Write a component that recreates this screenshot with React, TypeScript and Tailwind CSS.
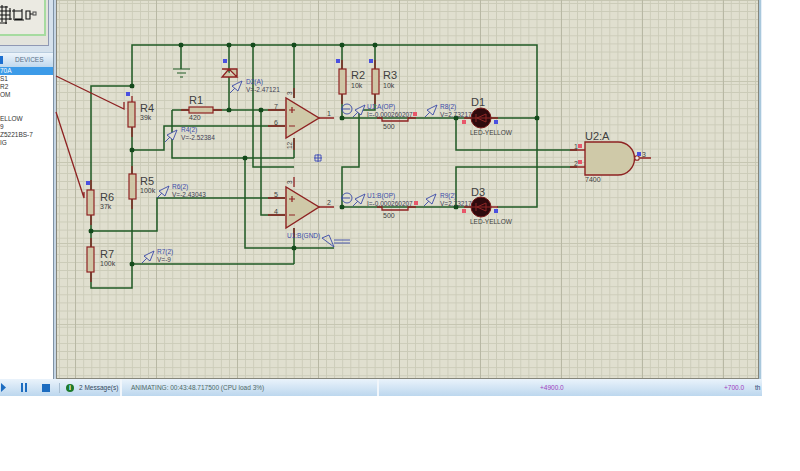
const WIRE = '#1f5a24';
const RED = '#8e2222';

const wires = [
  'M132 86V45H537V207H497',
  'M132 127V174M132 199V288H91V272',
  'M132 86H91V190M91 215V247',
  'M91 231H157V198H285',
  'M132 264H294',
  'M181 45V69',
  'M229 45V110',
  'M253 45V167H294',
  'M261 110V215H285',
  'M245 158V248H334',
  'M172 110V158H294',
  'M172 110H189M213 110H285',
  'M132 150H164V126H285',
  'M294 45V98M294 138V158',
  'M294 228V264',
  'M342 45V69M342 94V118',
  'M375 45V69M375 94V110H359V167H342V207',
  'M342 118H471M491 118H537',
  'M342 207H471',
  'M456 118V150H577M456 207V167H577',
];

const redLines = [
  'M285 110H268M285 126H268M285 198H268M285 215H268',
  'M294 98V88M294 138V150M294 187V177M294 228V238',
  'M319 118H334M319 207H334',
  'M132 96V102M132 127V137M132 174V166M132 199V209',
  'M91 180V190M91 215V225M91 247V238M91 272V282',
  'M342 69V60M342 94V104M375 69V60M375 94V104',
  'M189 110H181M213 110H222',
  'M377 118H382V121H408V118H416M377 207H382V210H408V207H416',
  'M570 150H585M570 167H585M640 158H651',
  'M471 118H464M491 118H498M471 207H464M491 207H498',
];

const dots = [
  [132, 86], [132, 150], [132, 264], [91, 231], [181, 45], [229, 45], [253, 45], [294, 45],
  [342, 45], [375, 45], [229, 110], [261, 110], [245, 158], [294, 248], [342, 118], [342, 207],
  [456, 118], [456, 207], [537, 118],
];

const resistors = [
  [128, 102], [129, 174], [87, 190], [87, 247], [339, 69], [372, 69],
];

const blueMarks = [[128, 94], [88, 183], [225, 61], [338, 61], [371, 61], [496, 122], [496, 211], [639, 154]];
const redMarks = [[464, 122], [464, 211], [415, 114], [416, 203], [580, 146], [580, 162]];

// name, x, y, size
const labels: [string, number, number, number][] = [
  ['R4', 140, 112, 11], ['39k', 140, 120, 7],
  ['R5', 140, 185, 11], ['100k', 140, 193, 7],
  ['R6', 100, 201, 11], ['37k', 100, 209, 7],
  ['R7', 100, 258, 11], ['100k', 100, 266, 7],
  ['R1', 189, 104, 11], ['420', 189, 120, 7],
  ['R2', 351, 79, 11], ['10k', 351, 88, 7],
  ['R3', 383, 79, 11], ['10k', 383, 88, 7],
  ['D1', 471, 106, 11], ['LED-YELLOW', 470, 135, 6.5],
  ['D3', 471, 196, 11], ['LED-YELLOW', 470, 224, 6.5],
  ['500', 383, 129, 7], ['500', 383, 218, 7],
  ['U2:A', 585, 140, 11], ['7400', 585, 182, 7],
  ['7', 274, 109, 7], ['6', 274, 125, 7], ['5', 274, 197, 7], ['4', 274, 214, 7],
  ['1', 327, 116, 7], ['2', 327, 205, 7], ['1', 574, 149, 7], ['2', 574, 166, 7], ['3', 642, 157, 7],
];

// name, value, x, y of the first line
const probes: [string, string, number, number][] = [
  ['D2(A)', 'V=-2.47121', 246, 84],
  ['R4(2)', 'V=-2.52384', 181, 132],
  ['R6(2)', 'V=-2.43043', 172, 189],
  ['R7(2)', 'V=-9', 157, 254],
  ['R8(2)', 'V=2.73217', 440, 109],
  ['R9(2)', 'V=2.73217', 440, 198],
];

const arrows = [[230, 93], [165, 142], [157, 198], [142, 263], [425, 117], [424, 206], [353, 117], [353, 206]];

function Probe({ x, y }: { x: number; y: number }) {
  return (
    <g stroke="#3a4aa8" strokeWidth="0.9" fill="none">
      <path d={`M${x} ${y}L${x + 5} ${y - 5}`} />
      <path d={`M${x + 2} ${y - 7}L${x + 12} ${y - 12}L${x + 8} ${y - 2}Z`} fill="#e0dfcf" />
    </g>
  );
}

function Schematic() {
  return (
    <svg
      className="absolute left-0 top-0"
      width="762"
      height="379"
      viewBox="0 0 762 379"
      fontFamily="'Liberation Sans', Arial, sans-serif"
    >
      <g fill="none" stroke={WIRE} strokeWidth="1.5">
        {wires.map((d) => (
          <path key={d} d={d} />
        ))}
      </g>
      <g fill="none" stroke={RED} strokeWidth="1.3">
        {redLines.map((d) => (
          <path key={d} d={d} />
        ))}
        <path d="M56 76L124 109V102M56 112L84 198V192" />
      </g>
      {dots.map(([x, y]) => (
        <rect key={`${x}-${y}`} x={x - 2.3} y={y - 2.3} width="4.600" height="4.600" rx="1.5" fill="#144a1c" />
      ))}

      {resistors.map(([x, y]) => (
        <rect key={`${x}-${y}`} x={x} y={y} width="7" height="25" fill="#cfc6a6" stroke={RED} strokeWidth="1.2" />
      ))}
      <rect x="189" y="107" width="24" height="6" fill="#cfc6a6" stroke={RED} strokeWidth="1.2" />

      {/* ground and zener */}
      <path d="M173 69H190M177 73H186M180 77H183" stroke={WIRE} strokeWidth="1.1" fill="none" />
      <path d="M222 69H237V77M229 69L222 77H237Z" stroke={RED} strokeWidth="1.3" fill="#cfc6a6" />

      {/* op amps */}
      <path d="M286 98V138L319 118Z" fill="#cfc9a8" stroke={RED} strokeWidth="1.4" />
      <path d="M286 187V228L319 207Z" fill="#cfc9a8" stroke={RED} strokeWidth="1.4" />
      <path d="M289 110H295M292 107V113M289 126H295M289 199H295M292 196V202M289 215H295" stroke={RED} strokeWidth="1.2" />

      {/* LEDs */}
      {[118, 207].map((y) => (
        <g key={y}>
          <circle cx="481" cy={y} r="10" fill="#2e0a0d" stroke="#7a1a1a" strokeWidth="1" />
          <path d={`M486 ${y - 4}V${y + 4}L477 ${y}ZM476 ${y - 4}V${y + 4}M471 ${y}H491`} fill="none" stroke="#8e2626" strokeWidth="1" />
        </g>
      ))}

      {/* NAND gate */}
      <path d="M585 142H618A16.500 16.500 0 0 1 618 175H585Z" fill="#cfc9a8" stroke={RED} strokeWidth="1.4" />
      <circle cx="637" cy="158" r="2.300" fill="#f0eee0" stroke={RED} strokeWidth="1.1" />

      {/* current probes */}
      {[118, 207].map((y) => (
        <g key={y} stroke="#3a4aa8" strokeWidth="0.9" fill="none">
          <circle cx="347" cy={y - 9} r="5" />
          <path d={`M341 ${y - 9}H350`} />
        </g>
      ))}

      {/* GND terminal probe */}
      <path d="M334 247L322 238L329 235ZM334 240H350M334 243H350" fill="none" stroke="#3a4aa8" strokeWidth="0.9" />

      {arrows.map(([x, y]) => (
        <Probe key={`${x}-${y}`} x={x} y={y} />
      ))}

      {blueMarks.map(([x, y]) => (
        <rect key={`${x}-${y}`} x={x - 2} y={y - 2} width="4" height="4" fill="#4a50e0" />
      ))}
      {redMarks.map(([x, y]) => (
        <rect key={`${x}-${y}`} x={x - 2} y={y - 2} width="4" height="4" fill="#e8566a" />
      ))}

      {/* origin marker */}
      <path d="M318 154V162M314 158H322M315 155H321V161H315Z" fill="none" stroke="#3a4ab8" strokeWidth="0.9" />

      {labels.map(([t, x, y, s]) => (
        <text key={`${t}-${x}-${y}`} x={x} y={y} fontSize={s} fill="#3e3e3e">
          {t}
        </text>
      ))}
      {probes.map(([n, v, x, y]) => (
        <g key={n} fontSize="6.500">
          <text x={x} y={y} fill="#3a4aa8">{n}</text>
          <text x={x} y={y + 8} fill="#3e3e55">{v}</text>
        </g>
      ))}
      <g fontSize="6.500">
        <text x="367" y="109" fill="#3a4aa8">U1:A(OP)</text>
        <text x="367" y="117" fill="#3e3e55">I=-0.000260207</text>
        <text x="367" y="198" fill="#3a4aa8">U1:B(OP)</text>
        <text x="367" y="206" fill="#3e3e55">I=-0.000260207</text>
        <text x="287" y="238" fill="#3a4aa8">U1:B(GND)</text>
        <text transform="translate(292 95) rotate(-90)" fill="#3e3e3e">3</text>
        <text transform="translate(292 149) rotate(-90)" fill="#3e3e3e">12</text>
        <text transform="translate(292 184) rotate(-90)" fill="#3e3e3e">3</text>
      </g>
    </svg>
  );
}

const devices = ['70A', 'S1', 'R2', 'OM', '', '', 'ELLOW', '9', 'Z5221BS-7', 'IG'];

export default function App() {
  return (
    <div className="relative w-[800px] h-[471px] bg-white overflow-hidden font-['Liberation_Sans',Arial,sans-serif]">
      <div className="w-[762px] h-[396px] flex flex-col bg-[#c9dced]">
        <div className="flex h-[379px]">
          {/* left panel */}
          <div className="w-[53px] shrink-0 flex flex-col">
            <div className="h-[52px] shrink-0 bg-[#d5e1ec]">
              <div className="w-[49px] h-[46px] bg-[#e3e3dc] border-r border-b border-[#8f98b4]">
                <div className="w-[46px] h-[36px] bg-[#ebeae2] border-r-2 border-b-2 border-[#a6dba0] overflow-hidden">
                  <svg width="44" height="34" viewBox="0 0 44 34" fill="none" stroke="#111" strokeWidth="1.1">
                    <path d="M0 7H8M0 11H11M0 15H10M2 5V22M6 6V24M10 8V20M0 19H12M0 23H7M12 11H22M14 9V20M14 20H24M22 9V19H15M26 11V19H30V11ZM30 14H33" />
                    <rect x="33" y="12" width="3" height="3" stroke="#555" />
                  </svg>
                </div>
              </div>
            </div>
            <div className="h-[15px] shrink-0 flex items-center bg-gradient-to-b from-[#eef5fb] to-[#bfd8ee] border-t border-[#b9cddf]">
              <div className="w-[3px] h-[8px] bg-[#1c6fd0]" />
              <span className="ml-[12px] text-[6.5px] text-[#5a7088] whitespace-nowrap">DEVICES</span>
            </div>
            <div className="flex-1 bg-white text-[6.5px] leading-[8px] text-[#333] overflow-hidden">
              <div className="h-[8px] bg-[#3c9be8] text-white">{devices[0]}</div>
              {devices.slice(1).map((d, i) => (
                <div key={i} className="h-[8px]">{d}</div>
              ))}
            </div>
          </div>
          <div className="w-[3px] shrink-0 border-l border-[#7f93a6] bg-[#c5d5e5]" />
          {/* editing canvas */}
          <div className="flex-1 flex">
            <div className="flex-1 border-l border-r border-b border-[#85857a] bg-[#e0dfcf] bg-[linear-gradient(to_right,#b8b8a4_1px,transparent_1px),linear-gradient(to_bottom,#c6c6b2_1px,transparent_1px),linear-gradient(to_right,#cbcbb8_1px,transparent_1px),linear-gradient(to_bottom,#cbcbb8_1px,transparent_1px)] bg-[size:81px_100%,100%_81px,8.100px_8.100px,8.100px_8.100px] bg-[position:18px_0,0_0,2px_3px,2px_3px]" />
            <div className="w-[3px] border-r border-[#e6eff7] bg-[#a9c8dc]" />
          </div>
        </div>
        {/* status bar */}
        <div className="h-[17px] flex items-center bg-gradient-to-b from-[#eaf3fb] to-[#bcd7ee] text-[6.5px] text-[#4a5a6a] whitespace-nowrap">
          <svg className="ml-[1px] shrink-0" width="5" height="9" viewBox="0 0 5 9"><path d="M0 0L5 4.500L0 9Z" fill="#1c6cc0" /></svg>
          <div className="ml-[15px] flex gap-[2px]">
            <div className="w-[2px] h-[9px] bg-[#1c6cc0]" />
            <div className="w-[2px] h-[9px] bg-[#1c6cc0]" />
          </div>
          <div className="ml-[15px] w-[8px] h-[8px] bg-[#1c6cc0]" />
          <div className="ml-[9px] w-px h-[10px] bg-[#a9bfd2]" />
          <div className="ml-[6px] w-[8px] h-[8px] rounded-full bg-[#1c7a2a] text-white text-[7px] leading-[8px] text-center font-bold">i</div>
          <span className="ml-[5px] w-[41px] text-[#33485c]">2 Message(s)</span>
          <div className="w-[2px] h-[17px] bg-[#f1f6fb]" />
          <span className="ml-[9px] w-[246px] text-[#4f6a66]">ANIMATING: 00:43:48.717500 (CPU load 3%)</span>
          <div className="w-[2px] h-[17px] bg-[#f1f6fb]" />
          <span className="ml-[161px] w-[184px] text-[#a040c0]">+4900.0</span>
          <span className="w-[31px] text-[#a040c0]">+700.0</span>
          <span className="text-[#1f3f6f]">th</span>
        </div>
      </div>
      <Schematic />
    </div>
  );
}
